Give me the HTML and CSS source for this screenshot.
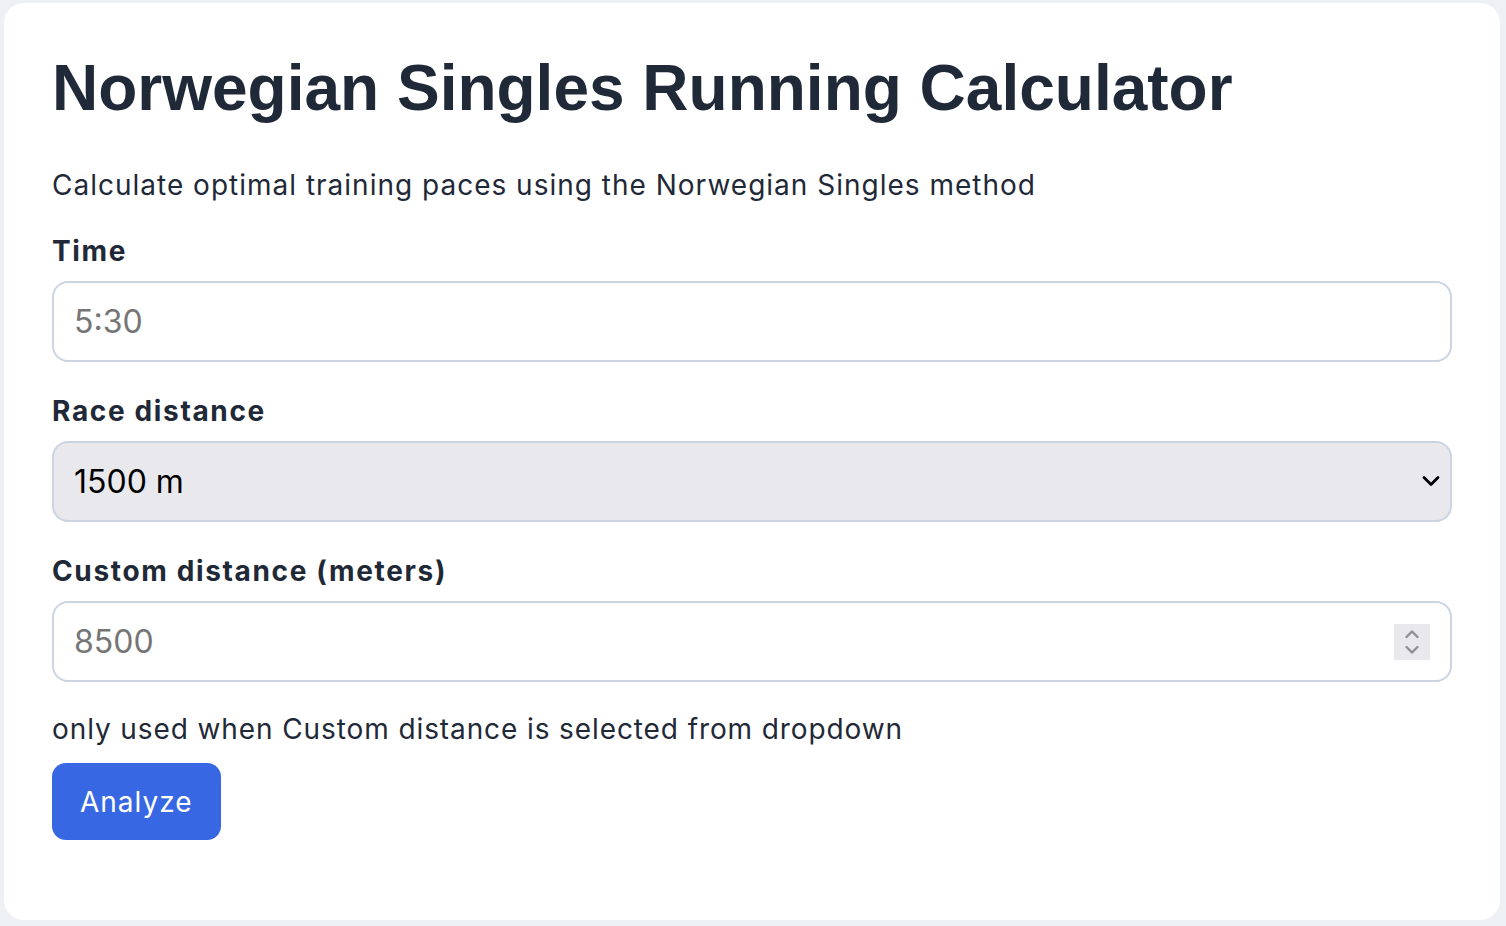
FILE: index.html
```html
<!DOCTYPE html>
<html>
<head>
<title>Norwegian Singles Running Calculator</title>
<link rel="stylesheet" href="styles.css">
</head>
<body>
<div class="card">
  <h1>Norwegian Singles Running Calculator</h1>
  <p class="intro">Calculate optimal training paces using the Norwegian Singles method</p>
  <form class="calc" onsubmit="return false;">
    <label class="lbl" for="time">Time</label>
    <input class="field" type="text" id="time" placeholder="5:30">

    <label class="lbl" for="dist">Race distance</label>
    <div class="select-wrap">
      <select class="field pick" id="dist">
        <option>1500 m</option>
        <option>Mile</option>
        <option>3000 m</option>
        <option>5000 m</option>
        <option>10 km</option>
        <option>Half marathon</option>
        <option>Marathon</option>
        <option>Custom</option>
      </select>
      <svg class="chev" width="18" height="12" viewBox="0 0 18 12"><path d="M2 2.5 L9 9.5 L16 2.5" fill="none" stroke="#000" stroke-width="2.8" stroke-linecap="round" stroke-linejoin="round"/></svg>
    </div>

    <label class="lbl" for="custom">Custom distance (meters)</label>
    <div class="num-wrap">
      <input class="field num" type="number" id="custom" placeholder="8500">
      <span class="spin">
        <svg width="16" height="28" viewBox="0 0 16 28"><path d="M2.5 9 L8 3.5 L13.5 9" fill="none" stroke="#8e8e93" stroke-width="2.4" stroke-linecap="round" stroke-linejoin="round"/><path d="M2.5 19 L8 24.5 L13.5 19" fill="none" stroke="#8e8e93" stroke-width="2.4" stroke-linecap="round" stroke-linejoin="round"/></svg>
      </span>
    </div>

    <p class="hint">only used when Custom distance is selected from dropdown</p>
    <button class="go" type="submit">Analyze</button>
  </form>
</div>
</body>
</html>
```

FILE: styles.css
```css
body {
  margin: 0;
  padding: 3px 6px 6px 4px;
  background-color: #edf0f5;
  font-family: Inter, "Liberation Sans", Arial, sans-serif;
  color: #1f2937;
}

.card {
  background-color: #ffffff;
  border-radius: 20px;
  padding: 53px 48px 80px 48px;
}

h1 {
  margin: 0 0 45px 0;
  font-family: "Liberation Sans", Arial, Helvetica, sans-serif;
  font-size: 64px;
  line-height: 64px;
  font-weight: bold;
  color: #1f2937;
}

.intro {
  margin: 0 0 26px 0;
  font-size: 28px;
  line-height: 40px;
  letter-spacing: 1px;
}

.calc {
  display: flex;
  flex-direction: column;
  align-items: flex-start;
}

.lbl {
  display: block;
  font-size: 28px;
  line-height: 40px;
  font-weight: bold;
  letter-spacing: 1.65px;
  margin-bottom: 10px;
}

.field {
  box-sizing: border-box;
  width: 100%;
  height: 81px;
  margin: 0 0 29px 0;
  padding: 0 20px;
  border: 2px solid #cbd5e1;
  border-radius: 16px;
  background-color: #ffffff;
  font-family: Inter, "Liberation Sans", Arial, sans-serif;
  font-size: 32px;
  color: #000000;
  outline: none;
}

.field::placeholder {
  color: #757575;
}

.select-wrap,
.num-wrap {
  position: relative;
  width: 100%;
}

.pick {
  -webkit-appearance: none;
  appearance: none;
  background-color: #e9e9ed;
  padding-left: 20px;
}

.chev {
  position: absolute;
  right: 12px;
  top: 34px;
  pointer-events: none;
}

.num {
  -moz-appearance: textfield;
  margin-bottom: 0;
}

.num::-webkit-outer-spin-button,
.num::-webkit-inner-spin-button {
  -webkit-appearance: none;
  margin: 0;
}

.spin {
  position: absolute;
  right: 22px;
  top: 23px;
  width: 36px;
  height: 36px;
  background-color: #e8e8ed;
  display: flex;
  align-items: center;
  justify-content: center;
}

.hint {
  margin: 27px 0 14px 0;
  font-size: 28px;
  line-height: 40px;
  letter-spacing: 0.9px;
}

.go {
  height: 77px;
  padding: 0 28px;
  border: 0;
  border-radius: 14px;
  background-color: #3867e3;
  color: #ffffff;
  font-family: Inter, "Liberation Sans", Arial, sans-serif;
  font-size: 28px;
  letter-spacing: 1px;
  cursor: pointer;
}
```
